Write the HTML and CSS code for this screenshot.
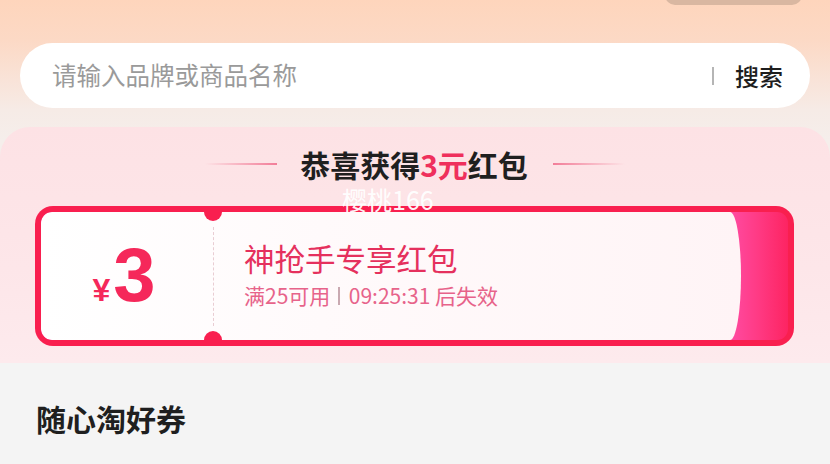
FILE: index.html
```html
<!DOCTYPE html>
<html lang="zh">
<head>
<meta charset="utf-8">
<link rel="stylesheet" href="styles.css">
</head>
<body>
<div class="page">
  <header class="header">
    <div class="top-pill"></div>
    <div class="search">
      <span class="search-placeholder">请输入品牌或商品名称</span>
      <span class="search-divider"></span>
      <span class="search-btn">搜索</span>
    </div>
    <section class="panel">
      <div class="title-row">
        <span class="title-line left"></span>
        <h2 class="title">恭喜获得<em>3元</em>红包</h2>
        <span class="title-line right"></span>
      </div>
      <div class="watermark">樱桃166</div>
      <div class="coupon">
        <div class="coupon-inner">
          <div class="coupon-body">
            <div class="coupon-amount"><span class="yen">¥</span><span class="num">3</span></div>
            <div class="coupon-divider"></div>
            <div class="coupon-info">
              <div class="coupon-name">神抢手专享红包</div>
              <div class="coupon-desc">满25可用<span class="sep"></span>09:25:31 后失效</div>
            </div>
          </div>
        </div>
      </div>
    </section>
  </header>
  <h3 class="section-title">随心淘好券</h3>
</div>
</body>
</html>
```
FILE: styles.css
```css
* { box-sizing: border-box; }
html, body {
  margin: 0;
  padding: 0;
}
body {
  width: 830px;
  height: 464px;
  overflow: hidden;
  background: #f4f4f4;
  font-family: "Noto Sans CJK SC", "Noto Sans", sans-serif;
}
.page { width: 830px; }

.header {
  position: relative;
  padding-top: 43px;
  background: linear-gradient(180deg, #fed5bc 0px, #fcd9c5 40px, #f9e3d8 80px, #f6ebe6 110px, #f5eeeb 140px);
}
.top-pill {
  position: absolute;
  top: -10px;
  left: 665px;
  width: 137px;
  height: 15px;
  border-radius: 0 0 10px 10px;
  background: #d9b7a1;
}

.search {
  margin: 0 20px;
  height: 65px;
  background: #fff;
  border-radius: 33px;
  display: flex;
  align-items: center;
  padding: 0 27px 0 32px;
}
.search-placeholder {
  flex: 1;
  font-size: 24.5px;
  color: #9a9a9a;
  line-height: 1;
}
.search-divider {
  width: 2px;
  height: 18px;
  background: #b5b5b5;
  margin-right: 21px;
}
.search-btn {
  font-size: 24px;
  line-height: 1;
  color: #1e1e1e;
  font-weight: 500;
}

.panel {
  position: relative;
  margin-top: 19px;
  border-radius: 30px 30px 0 0;
  background: linear-gradient(180deg, #fde2e5 0%, #fde6e9 60%, #fdeaed 100%);
  padding: 19px 0 17px;
}
.title-row {
  display: flex;
  align-items: center;
  justify-content: center;
  height: 36px;
}
.title-line {
  width: 72px;
  height: 2px;
}
.title-line.left {
  background: linear-gradient(90deg, rgba(242,110,140,0), #f27d98);
  margin-right: 23px;
}
.title-line.right {
  background: linear-gradient(90deg, #f27d98, rgba(242,110,140,0));
  margin-left: 25px;
}
.title {
  margin: 0;
  font-size: 30px;
  line-height: 36px;
  font-weight: 700;
  color: #1f1f1f;
}
.title em {
  font-style: normal;
  color: #ef2f5c;
}
.watermark {
  position: absolute;
  left: 342px;
  top: 60px;
  font-size: 25px;
  line-height: 24px;
  color: rgba(255,255,255,0.96);
  z-index: 2;
}

.coupon {
  margin: 24px 36px 0 35px;
  height: 140px;
  background: #f91f4f;
  border-radius: 18px;
  padding: 6px;
}
.coupon-inner {
  height: 100%;
  border-radius: 11px;
  background: linear-gradient(90deg, #ff4aa0 calc(100% - 56px), #ff3a84 calc(100% - 30px), #fd2462 100%);
  overflow: hidden;
}
.coupon-body {
  position: relative;
  height: 100%;
  width: 700px;
  display: flex;
  background: linear-gradient(90deg, #ffffff 0%, #fffafb 40%, #fff4f6 100%);
  border-radius: 11px;
  border-top-right-radius: 11px 64px;
  border-bottom-right-radius: 11px 64px;
}
.coupon-amount {
  width: 172px;
  display: flex;
  align-items: baseline;
  justify-content: center;
  color: #f5285a;
  font-family: "Liberation Sans", Arial, sans-serif;
  font-weight: 700;
  padding-top: 25px;
  padding-right: 6px;
}
.yen {
  font-size: 32px;
  margin-right: 3px;
}
.num {
  font-size: 76px;
  line-height: 1;
}
.coupon-divider {
  position: relative;
  width: 0;
  border-left: 1.5px dashed #e9cdd3;
  margin: 15px 0 14px;
}
.coupon-divider::before,
.coupon-divider::after {
  content: "";
  position: absolute;
  left: -10px;
  width: 18px;
  height: 18px;
  border-radius: 50%;
  background: #f91f4f;
}
.coupon-divider::before { top: -24px; }
.coupon-divider::after { bottom: -23px; }
.coupon-info {
  flex: 1;
  padding-left: 30px;
  display: flex;
  flex-direction: column;
  justify-content: center;
  padding-bottom: 4px;
}
.coupon-name {
  font-size: 30.5px;
  line-height: 38px;
  color: #e5305d;
}
.coupon-desc {
  margin-top: 5px;
  font-size: 21px;
  line-height: 27px;
  color: #e7638a;
  display: flex;
  align-items: center;
}
.sep {
  display: inline-block;
  width: 1.5px;
  height: 18px;
  background: #c9a9b1;
  margin: 0 9px 0 8px;
}

.section-title {
  margin: 40px 0 0 36px;
  font-size: 30px;
  line-height: 30px;
  font-weight: 700;
  color: #1f1f1f;
}
```
